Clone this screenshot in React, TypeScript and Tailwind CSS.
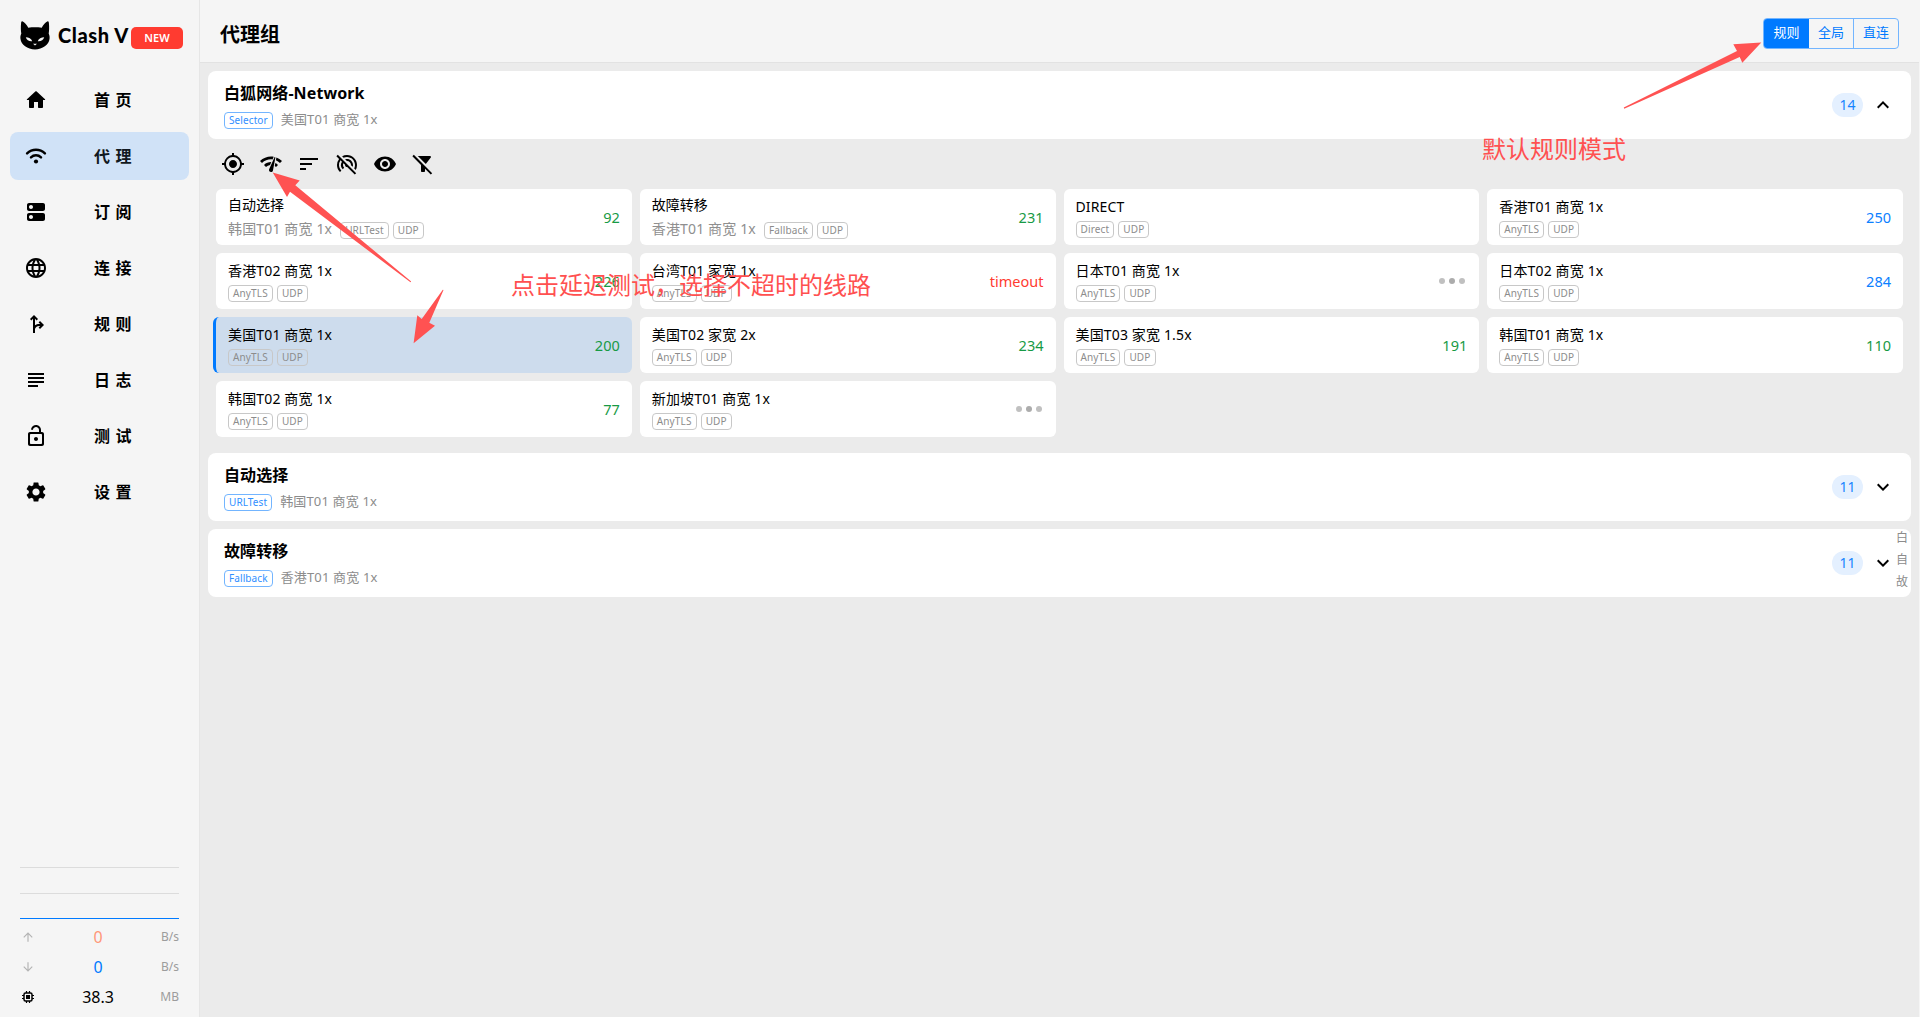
import type { ReactNode } from 'react';
import clsx from 'clsx';
import {
  MdArrowDownward,
  MdArrowUpward,
  MdExpandLess,
  MdExpandMore,
  MdFilterAltOff,
  MdForkRight,
  MdLanguage,
  MdMyLocation,
  MdNetworkCheck,
  MdSettings,
  MdSort,
  MdSubject,
  MdVisibility,
  MdWifiTetheringOff,
} from 'react-icons/md';

type Proxy = {
  name: string;
  now?: string;
  tags: string[];
  delay?: number | 'timeout' | 'loading';
};

const proxies: Proxy[] = [
  { name: '自动选择', now: '韩国T01 商宽 1x', tags: ['URLTest', 'UDP'], delay: 92 },
  { name: '故障转移', now: '香港T01 商宽 1x', tags: ['Fallback', 'UDP'], delay: 231 },
  { name: 'DIRECT', tags: ['Direct', 'UDP'] },
  { name: '香港T01 商宽 1x', tags: ['AnyTLS', 'UDP'], delay: 250 },
  { name: '香港T02 商宽 1x', tags: ['AnyTLS', 'UDP'], delay: 226 },
  { name: '台湾T01 家宽 1x', tags: ['AnyTLS', 'UDP'], delay: 'timeout' },
  { name: '日本T01 商宽 1x', tags: ['AnyTLS', 'UDP'], delay: 'loading' },
  { name: '日本T02 商宽 1x', tags: ['AnyTLS', 'UDP'], delay: 284 },
  { name: '美国T01 商宽 1x', tags: ['AnyTLS', 'UDP'], delay: 200 },
  { name: '美国T02 家宽 2x', tags: ['AnyTLS', 'UDP'], delay: 234 },
  { name: '美国T03 家宽 1.5x', tags: ['AnyTLS', 'UDP'], delay: 191 },
  { name: '韩国T01 商宽 1x', tags: ['AnyTLS', 'UDP'], delay: 110 },
  { name: '韩国T02 商宽 1x', tags: ['AnyTLS', 'UDP'], delay: 77 },
  { name: '新加坡T01 商宽 1x', tags: ['AnyTLS', 'UDP'], delay: 'loading' },
];

const Glyph = ({ d }: { d: string }) => (
  <svg viewBox="0 0 24 24" className="size-6 fill-current">
    <path d={d} />
  </svg>
);

const HomeIcon = () => (
  <Glyph d="M10 19v-5h4v5c0 .55.45 1 1 1h3c.55 0 1-.45 1-1v-7h1.7c.46 0 .68-.57.33-.87L12.67 3.6c-.38-.34-.96-.34-1.34 0l-8.36 7.53c-.34.3-.13.87.33.87H5v7c0 .55.45 1 1 1h3c.55 0 1-.45 1-1z" />
);

const WifiIcon = () => (
  <svg viewBox="0 0 24 24" className="size-6" fill="none" stroke="currentColor" strokeWidth="2.5" strokeLinecap="round">
    <path d="M3.1 9.300a12.800 12.800 0 0 1 17.800 0" />
    <path d="M7 13.300a7.300 7.300 0 0 1 10 0" />
    <circle cx="12" cy="17.500" r="2.100" fill="currentColor" stroke="none" />
  </svg>
);

const DnsIcon = () => (
  <Glyph d="M19 13H5c-1.100 0-2 .9-2 2v4c0 1.100.9 2 2 2h14c1.100 0 2-.9 2-2v-4c0-1.100-.9-2-2-2zM7 19c-1.100 0-2-.9-2-2s.9-2 2-2 2 .9 2 2-.9 2-2 2zM19 3H5c-1.100 0-2 .9-2 2v4c0 1.100.9 2 2 2h14c1.100 0 2-.9 2-2V5c0-1.100-.9-2-2-2zM7 9c-1.100 0-2-.9-2-2s.9-2 2-2 2 .9 2 2-.9 2-2 2z" />
);

const LockOpenIcon = () => (
  <Glyph d="M12 13c-1.100 0-2 .9-2 2s.9 2 2 2 2-.9 2-2-.9-2-2-2zm6-5h-1V6c0-2.760-2.240-5-5-5-2.280 0-4.270 1.540-4.840 3.750-.14.54.18 1.080.72 1.220.53.14 1.080-.18 1.220-.72C9.440 3.930 10.630 3 12 3c1.650 0 3 1.350 3 3v2H6c-1.100 0-2 .9-2 2v10c0 1.100.9 2 2 2h12c1.100 0 2-.9 2-2V10c0-1.100-.9-2-2-2zm0 11c0 .55-.45 1-1 1H7c-.55 0-1-.45-1-1v-8c0-.55.45-1 1-1h10c.55 0 1 .45 1 1v8z" />
);

const ChipIcon = () => (
  <svg viewBox="0 0 12 12" className="size-3" fill="none" stroke="currentColor">
    <rect x="2" y="2" width="8" height="8" rx="1.500" strokeWidth="1.500" />
    <rect x="4.500" y="4.500" width="3" height="3" fill="currentColor" strokeWidth="1" />
    <path d="M4.500 0v2M7.500 0v2M4.500 10v2M7.500 10v2M0 4.500h2M0 7.500h2M10 4.500h2M10 7.500h2" strokeWidth="1.200" />
  </svg>
);

const CatLogo = () => (
  <svg viewBox="0 0 30 29" className="h-[29px] w-[30px]">
    <path
      d="M2.300.3C1.400.1 1.200 1.200 1.100 2 .7 6 .8 9.500 1.300 12.500.4 14.500.2 16.300.5 18c.5 5.600 7 10.400 14.500 10.400S29 23.600 29.500 18c.3-1.700.1-3.500-.8-5.500.5-3 .6-6.500.2-10.500-.1-.8-.3-1.900-1.200-1.700-2.300 1.200-4.300 3.200-6 6.500-4.300-.6-9.100-.6-13.400 0C6.600 3.500 4.600 1.500 2.300.3z"
      fill="#000"
    />
    <path d="M5.800 16.200c2.800.1 5.700 1.200 6.400 4-3 .3-5.600-1-6.400-4zM24.200 16.200c-2.800.1-5.700 1.200-6.400 4 3 .3 5.600-1 6.400-4zM13 22.800h4L15 24.600z" fill="#f5f5f5" />
  </svg>
);

const navItems: { label: string; icon: ReactNode; active?: boolean }[] = [
  { label: '首页', icon: <HomeIcon /> },
  { label: '代理', icon: <WifiIcon />, active: true },
  { label: '订阅', icon: <DnsIcon /> },
  { label: '连接', icon: <MdLanguage /> },
  { label: '规则', icon: <MdForkRight /> },
  { label: '日志', icon: <MdSubject /> },
  { label: '测试', icon: <LockOpenIcon /> },
  { label: '设置', icon: <MdSettings /> },
];

const Sidebar = () => (
  <aside className="flex w-[200px] shrink-0 flex-col border-r border-[#e6e6e6] bg-[#f5f5f5]">
    <div className="flex h-[62px] items-start pt-[21px] pl-5">
      <CatLogo />
      <span className="ml-2 w-[73px] overflow-hidden font-['Lato'] text-[20px] leading-7 font-black tracking-[0.6px] whitespace-nowrap">
        Clash V
      </span>
      <span className="mt-1.5 flex h-[22px] w-[52px] items-center justify-center rounded-[5px] bg-[#ff3b30] text-[11px] font-semibold text-white">
        NEW
      </span>
    </div>

    <nav className="mt-[14px] flex flex-col gap-2 px-[10px]">
      {navItems.map((item) => (
        <a
          key={item.label}
          className={clsx('flex h-12 items-center rounded-lg pl-[14px] text-2xl', item.active && 'bg-[#d0e2f7]')}
        >
          {item.icon}
          <span className={clsx('ml-[46px] text-base font-bold tracking-[5.5px]', item.active && 'text-[#111820]')}>{item.label}</span>
        </a>
      ))}
    </nav>

    <div className="mt-auto px-5 pb-2">
      <div className="h-px bg-[#dcdcdc]" />
      <div className="mt-[25px] h-px bg-[#dcdcdc]" />
      <div className="mt-6 h-px bg-[#007aff]" />
      <Traffic icon={<MdArrowUpward className="text-[#b4b4b4]" />} value="0" unit="B/s" color="text-[#ff9778]" />
      <Traffic icon={<MdArrowDownward className="text-[#b4b4b4]" />} value="0" unit="B/s" color="text-[#007aff]" />
      <Traffic icon={<ChipIcon />} value="38.3" unit="MB" color="text-black" />
    </div>
  </aside>
);

const Traffic = ({ icon, value, unit, color }: { icon: ReactNode; value: string; unit: string; color: string }) => (
  <div className="flex h-[30px] items-center pt-[5px]">
    <span className="flex w-4 justify-center text-sm">{icon}</span>
    <span className={clsx('flex-1 pl-[3px] text-center text-base', color)}>{value}</span>
    <span className="w-[22px] text-right text-xs whitespace-nowrap text-[#9c9c9c]">{unit}</span>
  </div>
);

const Tag = ({ children }: { children: ReactNode }) => (
  <span className="flex h-[17px] items-center rounded border border-[#c8c8c8] px-1 text-[10px] tracking-[0.15px] text-[#8c8c8c]">{children}</span>
);

const Delay = ({ value }: { value: Proxy['delay'] }) => {
  if (value === undefined) return null;
  if (value === 'loading') {
    return (
      <span className="flex items-center gap-1 pr-0.5">
        <i className="size-[6px] rounded-full bg-[#c0c0c0]" />
        <i className="size-[6px] rounded-full bg-[#acacac]" />
        <i className="size-[6px] rounded-full bg-[#c0c0c0]" />
      </span>
    );
  }
  const color = value === 'timeout' ? 'text-[#ff3b30]' : value >= 250 ? 'text-[#0b80ff]' : 'text-[#179a45]';
  return <span className={clsx('text-[14.5px] leading-[22px]', color)}>{value}</span>;
};

const ProxyCard = ({ proxy, selected }: { proxy: Proxy; selected: boolean }) => (
  <div
    className={clsx(
      'flex h-14 items-center justify-between rounded-md px-3',
      selected ? '-ml-[3px] border-l-[3px] border-[#007aff] bg-[#cddced]' : 'bg-white'
    )}
  >
    {proxy.now ? (
      <div className="h-[50px] pt-0.5 whitespace-nowrap">
        <div className="text-sm leading-[21px]">{proxy.name}</div>
        <div className="mt-px flex h-[25px] items-center gap-1">
          <span className="mr-1 text-sm leading-[25px] tracking-[0.15px] text-[#8f8f8f]">{proxy.now}</span>
          <div className="flex gap-1 pt-1">
            {proxy.tags.map((tag) => (
              <Tag key={tag}>{tag}</Tag>
            ))}
          </div>
        </div>
      </div>
    ) : (
      <div className="h-[42px] whitespace-nowrap">
        <div className="text-sm leading-[22px] tracking-[0.15px]">{proxy.name}</div>
        <div className="mt-[3px] flex gap-1">
          {proxy.tags.map((tag) => (
            <Tag key={tag}>{tag}</Tag>
          ))}
        </div>
      </div>
    )}
    <Delay value={proxy.delay} />
  </div>
);

const GroupHeader = ({ name, type, now, count, open }: { name: string; type: string; now: string; count: number; open?: boolean }) => (
  <div className="flex h-[68px] items-center rounded-lg bg-white px-4">
    <div className="flex-1">
      <div className="text-base leading-6 font-bold tracking-[0.1px]">{name}</div>
      <div className="mt-1 flex h-5 items-start gap-2">
        <span className="mt-[3px] flex h-[17px] items-center rounded border border-[#73b5ff] px-1 text-[10px] tracking-[0.1px] text-[#318fff]">
          {type}
        </span>
        <span className="text-[13px] leading-5 tracking-[0.15px] text-[#8c8c8c]">{now}</span>
      </div>
    </div>
    <span className="flex h-6 w-[31px] items-center justify-center rounded-full bg-[#e4f0ff] text-sm text-[#1685ff]">{count}</span>
    <span className="ml-2 text-2xl">{open ? <MdExpandLess /> : <MdExpandMore />}</span>
  </div>
);

const Annotations = () => (
  <>
    <svg viewBox="0 0 1920 1017" className="pointer-events-none absolute inset-0 h-[1017px] w-[1920px] fill-[#ff5252]">
      <path d="M1623.800 107.600 1737 51 1733.300 44.300 1761.300 42.500 1742.300 62.800 1739.700 57 1624.200 108.700z" />
      <path d="M411.200 281.500 410.500 282.300 290 191.700 287 197 272.700 172.500 299.700 180.500 295.300 185.300z" />
      <path d="M443.500 290 429.300 322.700 435 325.700 413.600 343.200 417.300 315.300 421.700 319 442.800 289.800z" />
    </svg>
    <p className="absolute top-[267px] left-[511px] text-2xl leading-9 whitespace-nowrap text-[#ff5050]">
      点击延迟测试，选择不超时的线路
    </p>
    <p className="absolute top-[131px] left-[1482px] text-2xl leading-9 whitespace-nowrap text-[#ff5050]">默认规则模式</p>
  </>
);

const App = () => (
  <div className="relative flex h-[1017px] w-[1920px] overflow-hidden bg-[#f5f5f5] font-['Noto_Sans','Noto_Sans_CJK_SC',sans-serif] text-black">
    <Sidebar />

    <main className="mr-px flex flex-1 flex-col bg-[#ebebeb]">
      <header className="flex h-[63px] items-center justify-between border-b border-[#e2e2e2] bg-[#f5f5f5] px-5">
        <h1 className="pt-2 text-xl font-bold">代理组</h1>
        <div className="mt-1 flex h-[31px] overflow-hidden rounded border border-[#73b5ff] text-[13px] text-[#007aff]">
          <button className="w-[45px] bg-[#007aff] text-white">规则</button>
          <button className="w-11">全局</button>
          <button className="w-[45px] border-l border-[#73b5ff]">直连</button>
        </div>
      </header>

      <section className="flex flex-col px-2 pt-2">
        <GroupHeader name="白狐网络-Network" type="Selector" now="美国T01 商宽 1x" count={14} open />

        <div className="flex h-[50px] items-center gap-[14px] pl-[13px] text-2xl">
          <MdMyLocation />
          <MdNetworkCheck />
          <MdSort />
          <MdWifiTetheringOff />
          <MdVisibility />
          <MdFilterAltOff />
        </div>

        <div className="grid grid-cols-4 gap-2 px-2">
          {proxies.map((proxy, i) => (
            <ProxyCard key={proxy.name} proxy={proxy} selected={i === 8} />
          ))}
        </div>

        <div className="mt-4 flex flex-col gap-2">
          <GroupHeader name="自动选择" type="URLTest" now="韩国T01 商宽 1x" count={11} />
          <GroupHeader name="故障转移" type="Fallback" now="香港T01 商宽 1x" count={11} />
        </div>
      </section>
    </main>

    {/* quick jump letters */}
    <div className="absolute top-[527px] right-3 flex flex-col text-xs leading-[22px] text-[#8c8c8c]">
      <span>白</span>
      <span>自</span>
      <span>故</span>
    </div>

    <Annotations />
  </div>
);

export default App;
